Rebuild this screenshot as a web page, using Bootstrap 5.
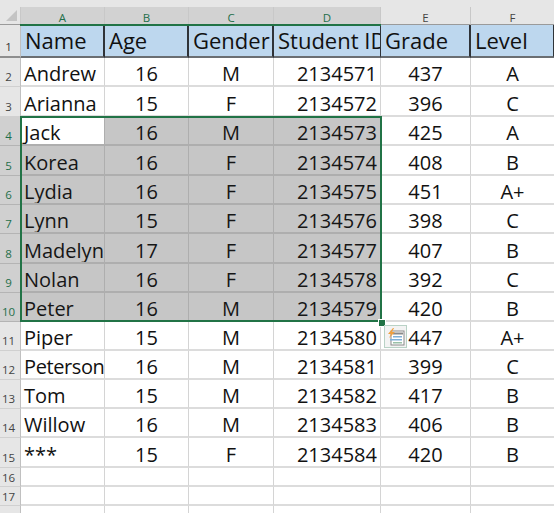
<!DOCTYPE html>
<html lang="en"><head><meta charset="utf-8"><title>Sheet</title>
<link href="https://cdn.jsdelivr.net/npm/bootstrap@5.3.0/dist/css/bootstrap.min.css" rel="stylesheet">
<style>
html,body{margin:0;background:#fff;overflow:hidden}
.sheet-wrap{width:554px;height:513px;overflow:hidden;font-family:"Open Sans","Noto Sans",sans-serif;color:#111}
.top-band{height:7px;background:#e6e6e6}
.grid-sheet{table-layout:fixed;border-collapse:separate;border-spacing:0;width:555px}
.grid-sheet td,.grid-sheet th{padding:0 3px 0 3px;font-weight:400;font-size:20px;line-height:23px;height:29px;vertical-align:bottom;overflow:hidden;white-space:nowrap;border-right:1px solid #d4d4d4;border-bottom:2px solid #dcdcdc;background:#fff}
.grid-sheet tr.rt td,.grid-sheet tr.rt th{height:30px}
.grid-sheet tr.thin td,.grid-sheet tr.thin th{height:19px;line-height:17px}
.grid-sheet .ctr{text-align:center}
.grid-sheet .rgt{text-align:right}
.grid-sheet .tight{letter-spacing:-.4px}
.grid-sheet .colh{height:18px;font-size:11.5px;line-height:13px;text-align:center;background:#e6e6e6;color:#444;border-right:1px solid #c8c8c8;border-bottom:1px solid #9a9a9a;padding:0}
.grid-sheet .colh.on{background:#d2d2d2;color:#1f6f4a}
.grid-sheet .rowh{padding:0 3px 0 0;text-align:center;font-size:11.5px;line-height:18px;background:#e6e6e6;color:#444;border-right:1px solid #c0c0c0;border-bottom:1px solid #d0d0d0}
.grid-sheet .rowh.on{background:#d0d0d0;color:#1f6f4a;border-bottom-color:#b4b4b4}
.grid-sheet .hd td{background:#bdd7ee;height:33px;font-size:22px;line-height:31px;border-right:2px solid #2f3338;border-bottom:2px solid #6a6e72;padding-left:4px;padding-right:0}
.grid-sheet .hd td.nl{border-right:1px solid #2f3338}
.grid-sheet .hd .rowh{background:#e6e6e6;border-right:1px solid #c0c0c0;border-bottom:2px solid #8e8e8e;font-size:11.5px;line-height:18px;color:#333;padding:0 3px 0 0}
.grid-sheet td.sel{background:#c6c6c6;border-right-color:#aeaeae;border-bottom-color:#aeaeae;color:#161616}
.grid-sheet td.act{background:#fff;border-bottom-color:#aeaeae;border-right-color:#aeaeae}
.sheet-area{position:relative;width:554px;height:506px}
.corner-mark{position:absolute;left:6px;top:3px;width:11px;height:11px;background:#c4c4c4;clip-path:polygon(100% 0,100% 100%,0 100%)}
.sel-frame{position:absolute;left:20px;top:109px;width:362px;height:206px;border:2px solid #217346;pointer-events:none}
.sel-top{position:absolute;left:20px;top:17px;width:361px;height:2px;background:#217346}
.sel-handle{position:absolute;left:378px;top:312px;width:6px;height:6px;background:#217346;border:1px solid #fff;box-sizing:content-box}
.flash-btn{position:absolute;left:384px;top:318px;width:23px;height:23px;background:#f3f3f3;border:1px solid #b9d2c6;display:flex;align-items:center;justify-content:center}
</style></head>
<body>
<div class="sheet-wrap">
<div class="top-band"></div>
<div class="sheet-area">
<table class="grid-sheet">
<colgroup><col style="width:21px"><col style="width:84px"><col style="width:84px"><col style="width:85px"><col style="width:107px"><col style="width:90px"><col style="width:84px"></colgroup>
<tbody>
<tr><th class="colh"></th><th class="colh on">A</th><th class="colh on">B</th><th class="colh on">C</th><th class="colh on">D</th><th class="colh">E</th><th class="colh">F</th></tr>
<tr class="hd"><td class="rowh">1</td><td>Name</td><td>Age</td><td>Gender</td><td class="nl">Student ID</td><td>Grade</td><td>Level</td></tr>
<tr><td class="rowh">2</td><td>Andrew</td><td class="ctr">16</td><td class="ctr">M</td><td class="rgt">2134571</td><td class="ctr">437</td><td class="ctr">A</td></tr>
<tr class="rt"><td class="rowh">3</td><td>Arianna</td><td class="ctr">15</td><td class="ctr">F</td><td class="rgt">2134572</td><td class="ctr">396</td><td class="ctr">C</td></tr>
<tr><td class="rowh on">4</td><td class="act">Jack</td><td class="ctr sel">16</td><td class="ctr sel">M</td><td class="rgt sel">2134573</td><td class="ctr">425</td><td class="ctr">A</td></tr>
<tr class="rt"><td class="rowh on">5</td><td class="sel">Korea</td><td class="ctr sel">16</td><td class="ctr sel">F</td><td class="rgt sel">2134574</td><td class="ctr">408</td><td class="ctr">B</td></tr>
<tr><td class="rowh on">6</td><td class="sel">Lydia</td><td class="ctr sel">16</td><td class="ctr sel">F</td><td class="rgt sel">2134575</td><td class="ctr">451</td><td class="ctr">A+</td></tr>
<tr><td class="rowh on">7</td><td class="sel">Lynn</td><td class="ctr sel">15</td><td class="ctr sel">F</td><td class="rgt sel">2134576</td><td class="ctr">398</td><td class="ctr">C</td></tr>
<tr class="rt"><td class="rowh on">8</td><td class="sel">Madelyn</td><td class="ctr sel">17</td><td class="ctr sel">F</td><td class="rgt sel">2134577</td><td class="ctr">407</td><td class="ctr">B</td></tr>
<tr><td class="rowh on">9</td><td class="sel">Nolan</td><td class="ctr sel">16</td><td class="ctr sel">F</td><td class="rgt sel">2134578</td><td class="ctr">392</td><td class="ctr">C</td></tr>
<tr><td class="rowh on">10</td><td class="sel">Peter</td><td class="ctr sel">16</td><td class="ctr sel">M</td><td class="rgt sel">2134579</td><td class="ctr">420</td><td class="ctr">B</td></tr>
<tr><td class="rowh">11</td><td>Piper</td><td class="ctr">15</td><td class="ctr">M</td><td class="rgt">2134580</td><td class="ctr">447</td><td class="ctr">A+</td></tr>
<tr><td class="rowh">12</td><td class="tight">Peterson</td><td class="ctr">16</td><td class="ctr">M</td><td class="rgt">2134581</td><td class="ctr">399</td><td class="ctr">C</td></tr>
<tr><td class="rowh">13</td><td>Tom</td><td class="ctr">15</td><td class="ctr">M</td><td class="rgt">2134582</td><td class="ctr">417</td><td class="ctr">B</td></tr>
<tr><td class="rowh">14</td><td>Willow</td><td class="ctr">16</td><td class="ctr">M</td><td class="rgt">2134583</td><td class="ctr">406</td><td class="ctr">B</td></tr>
<tr class="rt"><td class="rowh">15</td><td>***</td><td class="ctr">15</td><td class="ctr">F</td><td class="rgt">2134584</td><td class="ctr">420</td><td class="ctr">B</td></tr>
<tr class="thin"><td class="rowh">16</td><td></td><td></td><td></td><td></td><td></td><td></td></tr>
<tr class="thin"><td class="rowh">17</td><td></td><td></td><td></td><td></td><td></td><td></td></tr>
<tr class="thin"><td class="rowh"></td><td></td><td></td><td></td><td></td><td></td><td></td></tr>
</tbody></table>
<div class="corner-mark"></div>
<div class="sel-top"></div>
<div class="sel-frame"></div>
<div class="sel-handle"></div>
<div class="flash-btn">
<svg width="18" height="18" viewBox="0 0 18 18"><rect x="4" y="3" width="13" height="14" fill="#fff" stroke="#8a8a8a"/><rect x="6" y="4.5" width="10" height="2" fill="#8a8a8a"/><rect x="6" y="8" width="9" height="1.5" fill="#7fb0d8"/><rect x="3" y="11" width="12" height="1.5" fill="#7fb0d8"/><rect x="6" y="14" width="9" height="1.5" fill="#9ac0a8"/><path d="M6 0 1 6h3L2 10l6-6H5l2-4z" fill="#f0a040"/></svg>
</div>
</div>
</div>
<script src="https://cdn.jsdelivr.net/npm/bootstrap@5.3.0/dist/js/bootstrap.bundle.min.js"></script>
</body></html>
